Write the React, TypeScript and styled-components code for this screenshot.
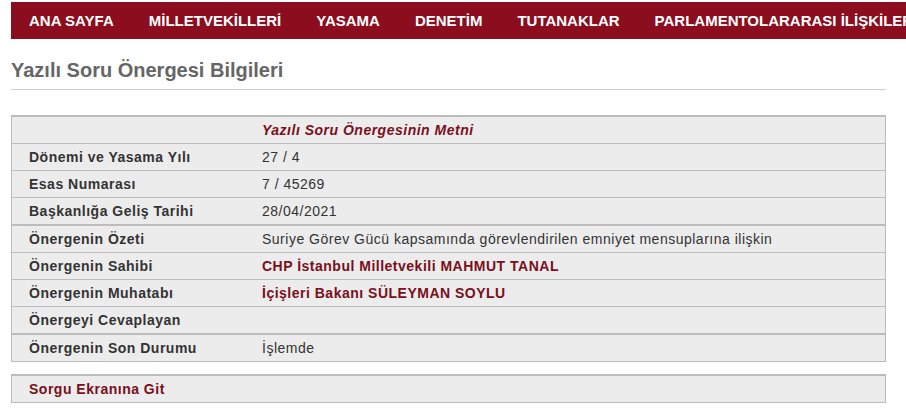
import React from "react";
import styled, { createGlobalStyle } from "styled-components";

const Global = createGlobalStyle`
  html, body { margin: 0; padding: 0; background: #fff; }
  body { font-family: "Liberation Sans", Arial, sans-serif; overflow: hidden; }
`;

const Page = styled.div`
  width: 906px;
  height: 418px;
  padding: 2px 20px 0 11px;
  box-sizing: border-box;
  overflow: hidden;
`;

const Nav = styled.nav`
  display: flex;
  align-items: center;
  height: 37px;
  background: #8b0d1e;
  margin-right: -20px;
  padding-left: 0.5px;
  white-space: nowrap;
  overflow: hidden;
`;

const NavItem = styled.a`
  color: #fff;
  font-weight: bold;
  font-size: 15px;
  padding: 0 17.5px;
  text-decoration: none;
  flex: none;
`;

const Title = styled.h1`
  margin: 0;
  padding: 20px 0 8px;
  font-size: 20px;
  font-weight: bold;
  color: #666;
  border-bottom: 1px solid #cccccc;
  line-height: 22px;
`;

const Table = styled.div`
  margin-top: 25px;
  border: 1px solid #bcbcbc;
  border-top-width: 2px;
  background: #ececec;
`;

const Row = styled.div<{ $thick?: boolean; $first?: boolean }>`
  display: grid;
  grid-template-columns: 233px 1fr;
  height: 26px;
  align-items: center;
  border-top: ${(p) => (p.$first ? "0" : p.$thick ? "2px" : "1px")} solid #bcbcbc;
  padding-left: 17px;
  font-size: 14px;
  letter-spacing: 0.5px;
  color: #333;
`;

const Label = styled.span`
  font-weight: bold;
  color: #333;
`;

const Value = styled.span<{ $tone?: "red" | "redItalic" }>`
  color: ${(p) => (p.$tone ? "#7b0f1b" : "#333")};
  font-weight: ${(p) => (p.$tone ? "bold" : "normal")};
  font-style: ${(p) => (p.$tone === "redItalic" ? "italic" : "normal")};
`;

const LinkBox = styled.div`
  margin-top: 12px;
  height: 26px;
  display: flex;
  align-items: center;
  padding-left: 17px;
  border: 1px solid #bcbcbc;
  border-top-width: 2px;
  background: #ececec;
  font-size: 14px;
  letter-spacing: 0.5px;
  font-weight: bold;
  color: #7b0f1b;
`;

const rows: { label: string; value: string; tone?: "red" | "redItalic"; thick?: boolean }[] = [
  { label: "", value: "Yazılı Soru Önergesinin Metni", tone: "redItalic" },
  { label: "Dönemi ve Yasama Yılı", value: "27 / 4" },
  { label: "Esas Numarası", value: "7 / 45269" },
  { label: "Başkanlığa Geliş Tarihi", value: "28/04/2021" },
  { label: "Önergenin Özeti", value: "Suriye Görev Gücü kapsamında görevlendirilen emniyet mensuplarına ilişkin", thick: true },
  { label: "Önergenin Sahibi", value: "CHP İstanbul Milletvekili MAHMUT TANAL", tone: "red" },
  { label: "Önergenin Muhatabı", value: "İçişleri Bakanı SÜLEYMAN SOYLU", tone: "red" },
  { label: "Önergeyi Cevaplayan", value: "" },
  { label: "Önergenin Son Durumu", value: "İşlemde", thick: true },
];

const navItems = ["ANA SAYFA", "MİLLETVEKİLLERİ", "YASAMA", "DENETİM", "TUTANAKLAR", "PARLAMENTOLARARASI İLİŞKİLER"];

export default function App() {
  return (
    <>
      <Global />
      <Page>
        <Nav>
          {navItems.map((n) => (
            <NavItem key={n}>{n}</NavItem>
          ))}
        </Nav>
        <Title>Yazılı Soru Önergesi Bilgileri</Title>
        <Table>
          {rows.map((r, i) => (
            <Row key={i} $first={i === 0} $thick={r.thick}>
              <Label>{r.label}</Label>
              <Value $tone={r.tone}>{r.value}</Value>
            </Row>
          ))}
        </Table>
        <LinkBox>Sorgu Ekranına Git</LinkBox>
      </Page>
    </>
  );
}
